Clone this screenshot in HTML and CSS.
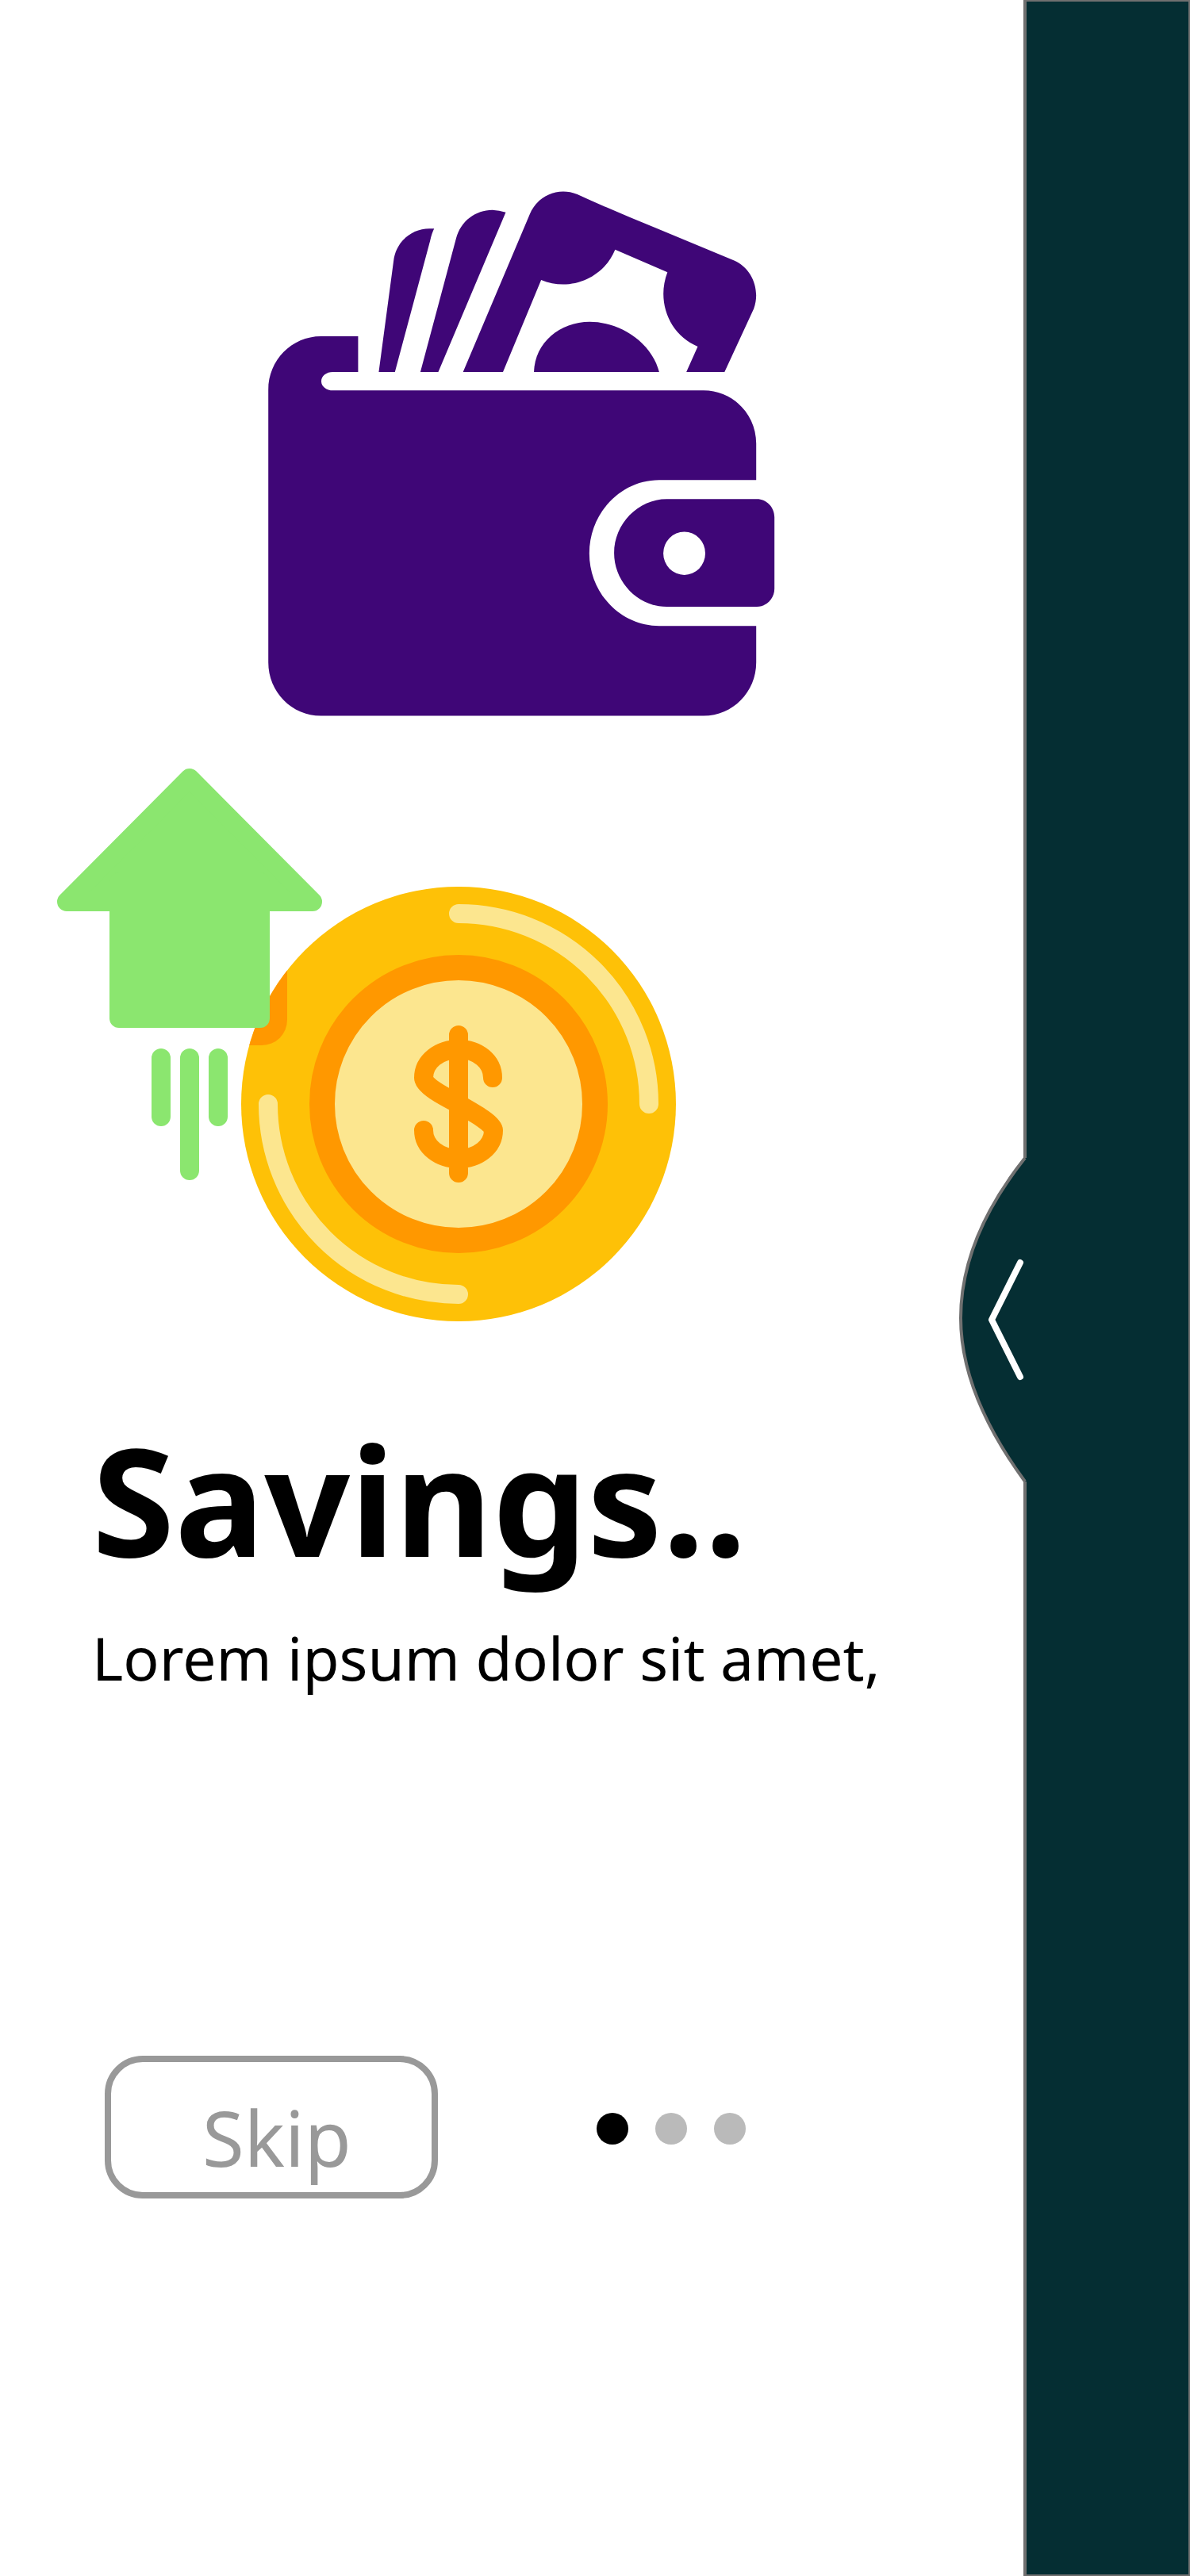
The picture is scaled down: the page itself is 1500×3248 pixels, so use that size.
FILE: index.html
```html
<!DOCTYPE html>
<html lang="en">
<head>
<meta charset="utf-8">
<meta name="viewport" content="width=device-width, initial-scale=1">
<title>Savings</title>
<link rel="stylesheet" href="styles.css">
</head>
<body>
<div class="screen">
  <main class="slide">
    <svg class="wallet" viewBox="18 20 640 664" aria-hidden="true">
      <g transform="scale(.4337 .4464)" fill="#3f0677">
        <path d="M303 457H195C110 457 42 525 42 608V1378C42 1461 110 1529 195 1529H1307C1392 1529 1460 1461 1460 1378V1275H1178C1066 1275 975 1183 975 1070S1066 863 1178 863H1460V760C1460 677 1392 610 1307 610H230C211 610 196 599 196 584S211 558 230 558H303Z"/>
        <path fill-rule="evenodd" d="M1200 917H1462C1490 917 1513 940 1513 968V1170C1513 1198 1490 1221 1462 1221H1200C1116 1221 1047 1150 1047 1069S1116 917 1200 917ZM1251 1009A61 61 0 1 0 1251 1131A61 61 0 1 0 1251 1009Z"/>
        <path d="M363 558L406 245C412 191 458 153 510 153H524Q517 166 512 188L410 558Z"/>
        <path d="M484 558L588 180C601 131 645 100 693 100Q713 101 732 107L536 558Z"/>
        <path d="M608 558L802 112C822 64 880 33 940 56Q1050 105 1170 152L1396 243C1448 265 1473 326 1453 379L1368 558H1257L1290 486C1208 453 1169 360 1202 276L1050 212C1016 293 920 332 835 298L724 558Z"/>
        <path d="M814 558C816 475 890 416 976 416C1066 416 1156 475 1178 558Z"/>
      </g>
    </svg>

    <svg class="growth" viewBox="22 18 782 700" aria-hidden="true">
      <defs><clipPath id="coin"><circle cx="528" cy="442" r="274"/></clipPath></defs>
      <circle cx="528" cy="442" r="274" fill="#fec107"/>
      <rect x="66" y="160" width="246" height="208" rx="32" fill="#ff9800" clip-path="url(#coin)"/>
      <circle cx="528" cy="442" r="172" fill="#fce68f" stroke="#ff9800" stroke-width="32"/>
      <g fill="none" stroke-width="24" stroke-linecap="round">
        <path stroke="#fce68f" d="M528 202A240 240 0 0 1 768 442M288 442A240 240 0 0 0 528 682"/>
        <path stroke="#ff9800" d="M528 355V529M571 409C571 388 552 373 528 373S484 388 484 409C484 419 509 432 528 442C549 454 572 467 572 475C572 496 552 511 528 511S484 496 484 475"/>
      </g>
      <g fill="#8be66f">
        <path d="M189 31L34 187H344Z" stroke="#8be66f" stroke-width="24" stroke-linejoin="round"/>
        <rect x="88" y="150" width="202" height="196" rx="12"/>
        <rect x="141" y="372" width="24" height="98" rx="12"/>
        <rect x="177" y="372" width="24" height="166" rx="12"/>
        <rect x="213" y="372" width="24" height="98" rx="12"/>
      </g>
    </svg>

    <div class="copy">
      <h1 class="title">Savings..</h1>
      <p class="text">Lorem ipsum dolor sit amet,</p>
    </div>

    <div class="actions">
      <button class="skip" type="button">Skip</button>
      <div class="dots" role="img" aria-label="Page 1 of 3">
        <span class="dot dot-active"></span>
        <span class="dot"></span>
        <span class="dot"></span>
      </div>
    </div>
  </main>

  <aside class="drawer">
    <button class="handle" type="button" aria-label="Next">
      <svg viewBox="0 0 88 412" aria-hidden="true">
        <path fill="#052e33" d="M88 2H84C30 70 3 137 3 204S32 339 84 410H88Z"/>
        <path fill="none" stroke="#707070" stroke-width="4" d="M84 2C30 70 3 137 3 204S32 339 84 410"/>
        <path fill="none" stroke="#fff" stroke-width="8" stroke-linecap="round" stroke-linejoin="round" d="M78 134L42 206L78 278"/>
      </svg>
    </button>
  </aside>
</div>
</body>
</html>
```
FILE: styles.css
```css
* {
  box-sizing: border-box;
}

body {
  margin: 0;
  background: #fff;
  color: #000;
  font-family: "Noto Sans", "Open Sans", sans-serif;
}

.screen {
  display: flex;
  min-height: 100vh;
}

.slide {
  flex: 1;
  min-width: 0;
  padding: 240px 72px;
}

.wallet {
  display: block;
  width: 640px;
  height: 664px;
  margin: 0 0 64px 266px;
}

.growth {
  display: block;
  width: 782px;
  height: 700px;
}

.copy {
  padding: 90px 0 0 44px;
}

.title {
  margin: 0;
  font-size: 189px;
  line-height: 264px;
  font-weight: 700;
}

.text {
  margin: 0;
  font-size: 75px;
  line-height: 136px;
}

.actions {
  display: flex;
  align-items: center;
  gap: 200px;
  margin-top: 434px;
  padding-left: 60px;
}

.skip {
  width: 420px;
  height: 180px;
  padding: 26px 0 0 14px;
  border: 8px solid #999;
  border-radius: 48px;
  background: #fff;
  color: #999;
  font: inherit;
  font-size: 96px;
  line-height: 132px;
}

.dots {
  display: flex;
  gap: 34px;
  padding-top: 4px;
}

.dot {
  width: 40px;
  height: 40px;
  border-radius: 50%;
  background: #bababa;
}

.dot-active {
  background: #000;
}

.drawer {
  position: relative;
  width: 14%;
  border: 2px solid #707070;
  border-left-width: 4px;
  background: #052e33;
}

.handle {
  position: absolute;
  top: calc(45% - 4px);
  left: -86px;
  padding: 0;
  border: 0;
  background: none;
}

.handle svg {
  display: block;
  width: 88px;
  height: 412px;
}
```
